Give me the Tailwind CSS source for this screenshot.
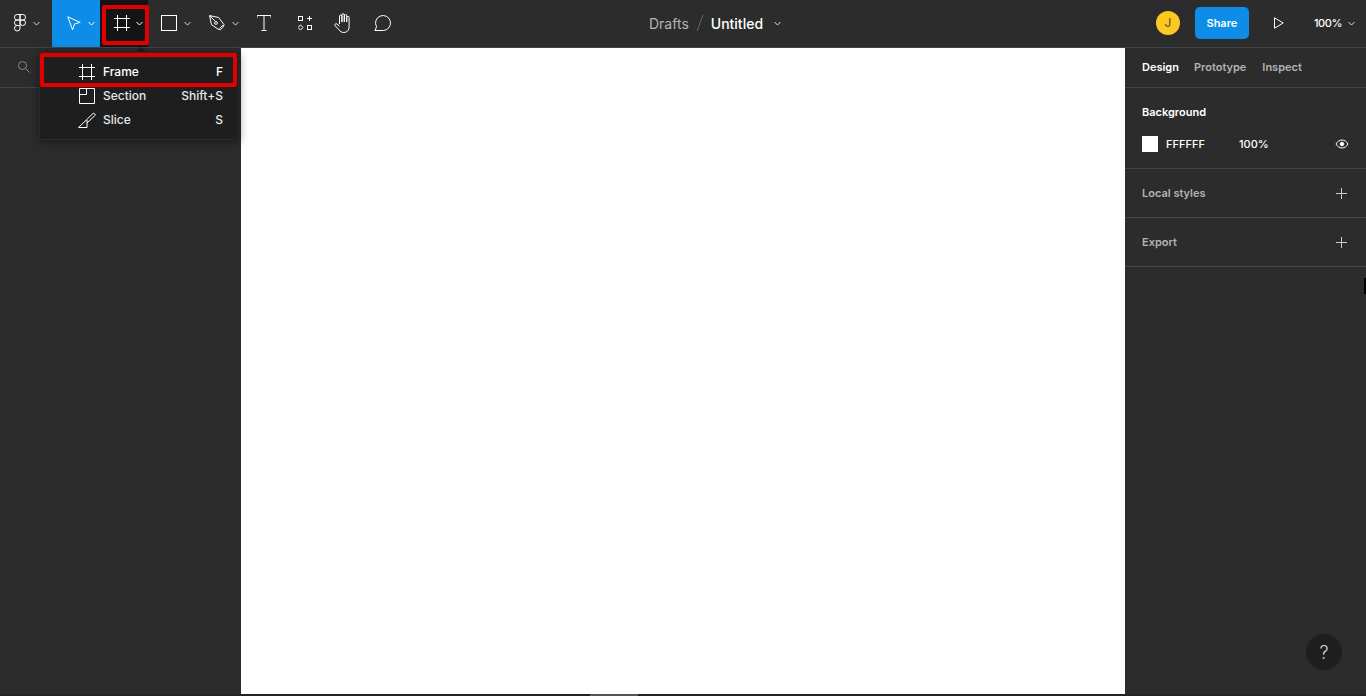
<!DOCTYPE html>
<html lang="en">

<head>
  <meta charset="UTF-8" />
  <title>Untitled - Figma</title>
  <script src="https://cdn.jsdelivr.net/npm/@tailwindcss/browser@4"></script>
</head>

<body class="bg-[#2c2c2c] text-white font-['Inter',sans-serif] overflow-hidden">

  <div class="relative h-[696px] w-[1366px] flex flex-col overflow-hidden">

    <!-- toolbar -->
    <header class="h-[48px] shrink-0 flex items-stretch bg-[#2c2c2c] border-b border-[#444]">
      <div class="w-[52px] pb-[1px] flex items-center pl-[14px]">
        <svg width="12" height="18" viewBox="0 0 12 18" fill="none" stroke="#fff" stroke-width="1">
          <path d="M6 .5H3.2a2.75 2.75 0 0 0 0 5.5H6zM6 .5h2.8a2.75 2.75 0 0 1 0 5.5H6zM6 6H3.2a2.75 2.75 0 0 0 0 5.5H6zM11.5 8.75a2.75 2.75 0 1 1-5.500 0 2.750 2.750 0 0 1 5.500 0zM6 11.500H3.200A2.750 2.750 0 1 0 6 14.250z" />
        </svg>
        <svg class="ml-[7px]" width="7" height="5" viewBox="0 0 7 5" fill="none" stroke="#ddd"><path d="M.5 1l3 3 3-3" /></svg>
      </div>
      <div class="w-[48px] pb-[1px] bg-[#0d8de8] flex items-center pl-[15px]">
        <svg width="14" height="15" viewBox="0 0 14 15" fill="none" stroke="#fff" stroke-width="1"><path d="M.8.8l12.400 5.600-5.600 1.500-2 5.900z" /></svg>
        <svg class="ml-[7px]" width="7" height="5" viewBox="0 0 7 5" fill="none" stroke="#fff"><path d="M.5 1l3 3 3-3" /></svg>
      </div>
      <div class="w-[48px] pb-[1px] bg-[#141414] flex items-center pl-[14px]">
        <svg width="16" height="16" viewBox="0 0 16 16" fill="none" stroke="#fff" stroke-width="1"><path d="M3.500 0v16M12.500 0v16M0 3.500h16M0 12.500h16" /></svg>
        <svg class="ml-[6px]" width="7" height="5" viewBox="0 0 7 5" fill="none" stroke="#fff"><path d="M.5 1l3 3 3-3" /></svg>
      </div>
      <div class="w-[48px] pb-[1px] flex items-center pl-[13px]">
        <div class="w-[16px] h-[16px] border border-white"></div>
        <svg class="ml-[7px]" width="7" height="5" viewBox="0 0 7 5" fill="none" stroke="#ddd"><path d="M.5 1l3 3 3-3" /></svg>
      </div>
      <div class="w-[48px] pb-[1px] flex items-center pl-[13px]">
        <svg width="16" height="16" viewBox="0 0 16 16" fill="none" stroke="#fff" stroke-width="1"><path d="M.6.6l9 1.900 5.500 7.200-1.100 2.600-2.600 2.400-2.400-.6L2.400 9.600zM.6.6l5.800 5.800M8 7a1.400 1.400 0 1 1-2 0 1.400 1.400 0 0 1 2 0zM10.500 13.500l3.500-3.500" /></svg>
        <svg class="ml-[7px] shrink-0" width="7" height="5" viewBox="0 0 7 5" fill="none" stroke="#ddd"><path d="M.5 1l3 3 3-3" /></svg>
      </div>
      <div class="w-[40px] pb-[1px] flex items-center justify-center">
        <svg width="14" height="16" viewBox="0 0 14 16" fill="none" stroke="#fff" stroke-width="1"><path d="M0 3V.5h14V3M7 .5v15M4.500 15.500h5" /></svg>
      </div>
      <div class="w-[40px] pb-[1px] ml-[1px] flex items-center justify-center">
        <svg width="14" height="14" viewBox="0 0 14 14" fill="none" stroke="#fff" stroke-width="1"><rect x=".5" y=".5" width="4" height="4" /><rect x="9.500" y="9.500" width="4" height="4" /><path d="M11.500 0v5M9 2.500h5M2.500 8.800l2.400 2.700-2.400 2.700L.1 11.500z" /></svg>
      </div>
      <div class="w-[40px] pb-[1px] -ml-[2px] flex items-center justify-center">
        <svg width="18" height="20" viewBox="0 0 18 20" fill="none" stroke="#fff" stroke-width="1"><path d="M5.500 11V3.200a1.200 1.200 0 0 1 2.400 0V9M7.900 9V1.900a1.200 1.200 0 0 1 2.400 0V9M10.300 9V2.800a1.200 1.200 0 0 1 2.400 0V9M12.700 9V4.500a1.200 1.200 0 0 1 2.400 0V14c0 3-2 5.500-5.200 5.500-2.400 0-3.700-1-4.900-2.700L1 12.600c-.8-1.200.9-2.600 2-1.600l2.500 2.200" /></svg>
      </div>
      <div class="w-[40px] pb-[1px] flex items-center justify-center">
        <svg width="18" height="18" viewBox="0 0 18 18" fill="none" stroke="#fff" stroke-width="1"><path d="M1 17l1.500-4.300A7.500 7.500 0 1 1 9.500 16.500H1z" /></svg>
      </div>

      <div class="ml-[246px] pb-[1px] flex items-center text-[14px]">
        <span class="text-[#b3b3b3]">Drafts</span>
        <svg class="mx-[7px]" width="8" height="18" viewBox="0 0 8 18" fill="none" stroke="#666"><path d="M7 1L1 17" /></svg>
        <span class="font-medium">Untitled</span>
        <svg class="ml-[11px]" width="7" height="5" viewBox="0 0 7 5" fill="none" stroke="#ddd"><path d="M.5 1l3 3 3-3" /></svg>
      </div>

      <div class="ml-auto pb-[1px] flex items-center pr-[11px]">
        <div class="w-[24px] h-[24px] rounded-full bg-[#fcc822] text-[#5c4a10] text-[12px] flex items-center justify-center">J</div>
        <div class="ml-[15px] w-[54px] h-[32px] rounded-[5px] bg-[#0d8de8] text-[11px] font-semibold flex items-center justify-center">Share</div>
        <svg class="ml-[25px]" width="10" height="12" viewBox="0 0 10 12" fill="none" stroke="#fff"><path d="M.5.8L9.200 6 .5 11.200z" /></svg>
        <span class="ml-[30px] text-[11px] font-medium tracking-[-0.4px]">100%</span>
        <svg class="ml-[6px]" width="7" height="5" viewBox="0 0 7 5" fill="none" stroke="#ddd"><path d="M.5 1l3 3 3-3" /></svg>
      </div>
    </header>

    <div class="flex flex-1 min-h-0">
      <!-- layers panel -->
      <aside class="w-[241px] shrink-0 bg-[#2c2c2c]">
        <div class="h-[40px] border-b border-[#444] flex items-center pl-[17px]">
          <svg class="-mt-[2px]" width="13" height="13" viewBox="0 0 13 13" fill="none" stroke="#8a8a8a"><circle cx="5.500" cy="5.500" r="4" /><path d="M8.500 8.500l4 4" /></svg>
        </div>
      </aside>

      <!-- canvas -->
      <main class="flex-1 bg-white"></main>

      <!-- properties panel -->
      <aside class="w-[241px] shrink-0 bg-[#2c2c2c]">
        <div class="h-[40px] border-b border-[#444] flex items-center pl-[17px] text-[11px] font-semibold text-[#b3b3b3]">
          <span class="text-white">Design</span>
          <span class="ml-[15px]">Prototype</span>
          <span class="ml-[16px]">Inspect</span>
        </div>
        <div class="h-[81px] border-b border-[#444] px-[17px] pt-[16px]">
          <div class="text-[11px] font-semibold leading-[16px]">Background</div>
          <div class="mt-[16px] flex items-center text-[11px] font-medium h-[16px]">
            <div class="w-[16px] h-[16px] bg-white"></div>
            <span class="ml-[8px] w-[73px]">FFFFFF</span>
            <span>100%</span>
            <svg class="ml-auto" width="14" height="10" viewBox="0 0 14 10" fill="none" stroke="#fff"><path d="M1 5c1.500-2.600 3.500-4 6-4s4.500 1.400 6 4c-1.500 2.600-3.500 4-6 4S2.500 7.600 1 5z" /><circle cx="7" cy="5" r="1.800" fill="#fff" /></svg>
          </div>
        </div>
        <div class="h-[49px] border-b border-[#444] pl-[17px] pr-[19px] flex items-center justify-between text-[11px] font-semibold text-[#b3b3b3]">
          <span>Local styles</span>
          <svg width="11" height="11" viewBox="0 0 11 11" fill="none" stroke="#ccc"><path d="M5.500 0v11M0 5.500h11" /></svg>
        </div>
        <div class="h-[49px] border-b border-[#444] pl-[17px] pr-[19px] flex items-center justify-between text-[11px] font-semibold text-[#b3b3b3]">
          <span>Export</span>
          <svg width="11" height="11" viewBox="0 0 11 11" fill="none" stroke="#ccc"><path d="M5.500 0v11M0 5.500h11" /></svg>
        </div>
      </aside>
    </div>

    <!-- bottom scrollbar strip -->
    <div class="h-[2px] shrink-0 bg-[#222] pl-[590px]">
      <div class="w-[48px] h-full bg-[#555]"></div>
    </div>

    <!-- frame dropdown -->
    <div class="absolute left-[39px] top-[52px] w-[200px] h-[88px] bg-[#1e1e1e] border border-[#2a2a2a] rounded-[2px] shadow-[0_2px_10px_rgba(0,0,0,0.45)] py-[7px] text-[12px] font-medium">
      <div class="absolute left-[95px] -top-[6px] w-0 h-0 border-x-[6px] border-x-transparent border-b-[5px] border-b-[#1e1e1e]"></div>
      <div class="h-[24px] flex items-center pl-[39px] pr-[15px]">
        <svg width="16" height="16" viewBox="0 0 16 16" fill="none" stroke="#fff"><path d="M3.500 0v16M12.500 0v16M0 3.500h16M0 12.500h16" /></svg>
        <span class="ml-[8px]">Frame</span>
        <span class="ml-auto">F</span>
      </div>
      <div class="h-[24px] flex items-center pl-[39px] pr-[15px] text-[#e6e6e6]">
        <svg width="16" height="16" viewBox="0 0 16 16" fill="none" stroke="#fff"><path d="M.5.5h15v15H.5zM.5 6.500h7v-6" /></svg>
        <span class="ml-[8px]">Section</span>
        <span class="ml-auto">Shift+S</span>
      </div>
      <div class="h-[24px] flex items-center pl-[38px] pr-[15px] text-[#e6e6e6]">
        <svg width="18" height="16" viewBox="0 0 18 16" fill="none" stroke="#fff"><path d="M.5 15.500L15.500 1l2 2L9 11M.5 15.500H9V8" /></svg>
        <span class="ml-[7px]">Slice</span>
        <span class="ml-auto">S</span>
      </div>
    </div>

    <!-- red annotations -->
    <div class="absolute left-[102px] top-[5px] w-[47px] h-[40px] border-[4px] border-[#e00000] rounded-[2px]"></div>
    <div class="absolute left-[40px] top-[53px] w-[197px] h-[34px] border-[4px] border-[#e00000] rounded-[2px]"></div>

    <!-- help -->
    <div class="absolute left-[1306px] top-[634px] w-[36px] h-[36px] rounded-full bg-[#1e1e1e] flex items-center justify-center text-[18px] font-light text-[#d8d8d8]">?</div>

    <!-- cursor sliver at the window edge -->
    <div class="absolute left-[1364px] top-[278px] w-[2px] h-[16px] bg-black"></div>
  </div>

</body>

</html>
